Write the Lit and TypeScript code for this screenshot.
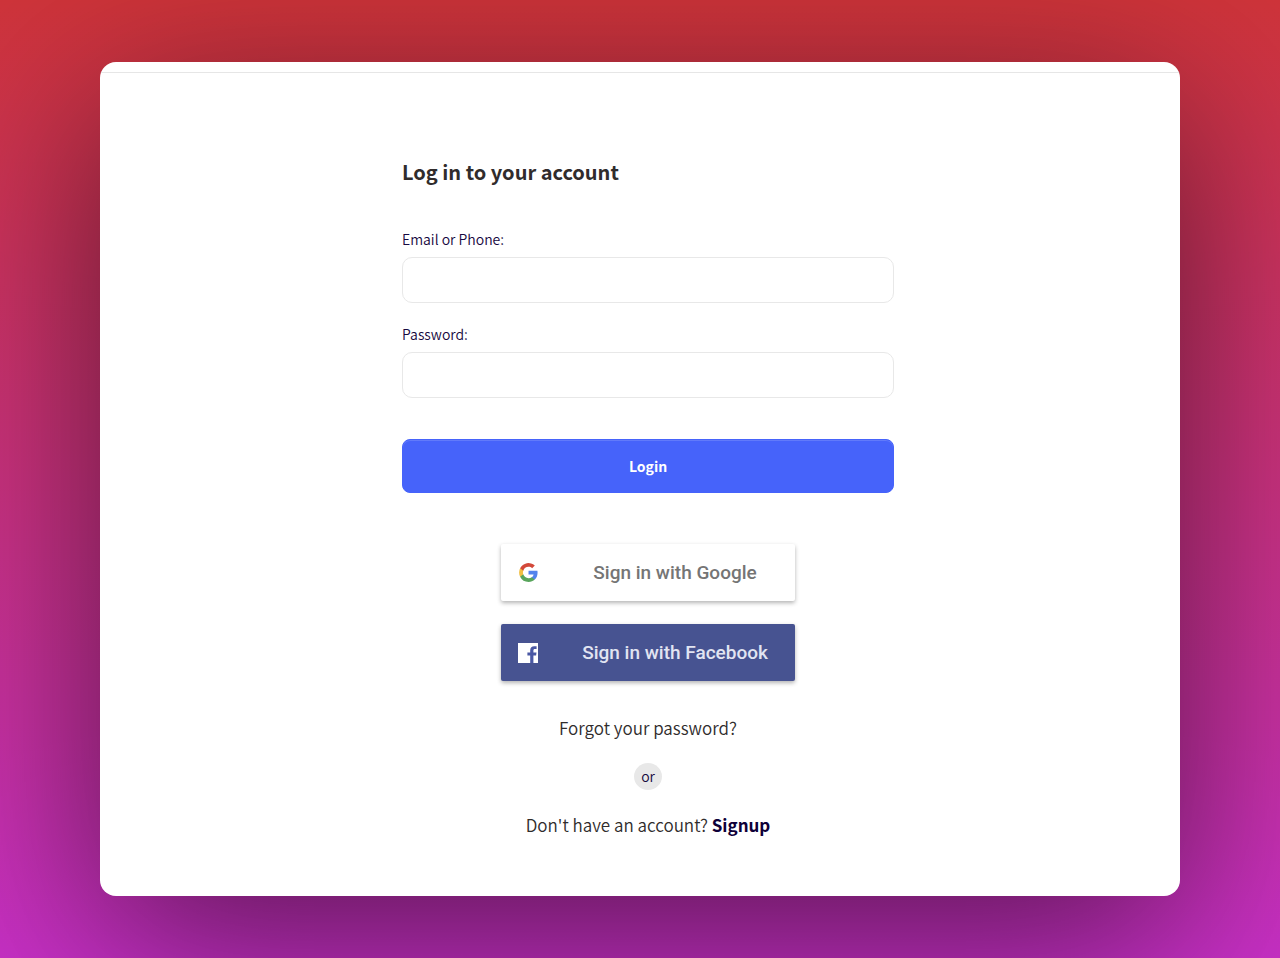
import { LitElement, html, css } from "lit";
import { customElement } from "lit/decorators.js";

@customElement("app-root")
export class AppRoot extends LitElement {
  static styles = css`
    :host {
      display: block;
      font-family: "Noto Sans CJK JP", "Noto Sans", sans-serif;
      color: #302c2c;
    }
    * {
      box-sizing: border-box;
    }
    .page {
      min-height: 100vh;
      display: grid;
      align-items: center;
      padding: 60px 100px;
      overflow: hidden;
      background: linear-gradient(#cf343a, #c830c6);
    }
    .card {
      padding: 10px 0 57px;
      border-radius: 16px;
      overflow: hidden;
      background: #fff;
      box-shadow: 0 45px 180px rgba(0, 0, 0, 0.55);
    }
    .body {
      border-top: 1px solid #e6e6e6;
      padding: 83px 16px 0 32px;
    }
    .form {
      width: 100%;
      max-width: 492px;
      margin: 0 auto;
      display: flex;
      flex-direction: column;
    }
    h1 {
      margin: 0 0 39px;
      font-size: 20px;
      line-height: 32px;
      font-weight: 700;
    }
    label {
      font-size: 14px;
      line-height: 24px;
      margin-bottom: 6px;
      color: #170840;
      font-weight: 350;
    }
    input {
      height: 46px;
      width: 100%;
      margin: 0 0 19px;
      padding: 0 16px;
      border: 1px solid #e8e8e8;
      border-radius: 10px;
      background: #fff;
      font: inherit;
      font-size: 14px;
    }
    button {
      font: inherit;
      cursor: pointer;
    }
    .login {
      height: 54px;
      margin: 22px 0 51px;
      border: 1px solid #4663fa;
      border-radius: 8px;
      background: #4663fa;
      box-shadow: inset 0 1px rgba(255, 255, 255, 0.15);
      color: #fff;
      font-size: 14px;
      font-weight: 700;
    }
    .social {
      align-self: center;
      display: flex;
      align-items: center;
      width: 294px;
      height: 57px;
      margin-bottom: 23px;
      padding: 0 16px;
      border: 0;
      border-radius: 2px;
      box-shadow: 0 2px 4px rgba(0, 0, 0, 0.3);
      font-family: Roboto, sans-serif;
      font-size: 19px;
      font-weight: 500;
      background: #fff;
      color: #757575;
    }
    .social svg {
      width: 22px;
      height: 22px;
      flex: none;
    }
    .social span {
      flex: 1;
      padding-left: 32px;
      text-align: center;
      white-space: nowrap;
    }
    .facebook {
      background: #475391;
      color: #e1e4f2;
    }
    a {
      color: inherit;
      text-decoration: none;
    }
    .line {
      margin: 0;
      text-align: center;
      font-size: 17px;
      line-height: 28px;
      font-weight: 350;
    }
    .forgot {
      margin-top: 10px;
    }
    .or {
      align-self: center;
      width: 28px;
      height: 27px;
      margin: 21px 0;
      border-radius: 50%;
      background: #e8e8e8;
      color: #170840;
      font-size: 14px;
      line-height: 27px;
      text-align: center;
      font-weight: 350;
    }
    .signup {
      color: #0e0038;
      font-weight: 700;
    }
  `;

  render() {
    return html`
      <main class="page">
        <section class="card">
          <div class="body">
            <form class="form" @submit=${(e: Event) => e.preventDefault()}>
              <h1>Log in to your account</h1>
              <label for="user">Email or Phone:</label>
              <input id="user" type="text" autocomplete="username" />
              <label for="pass">Password:</label>
              <input id="pass" type="password" autocomplete="current-password" />
              <button class="login" type="submit">Login</button>
              <button class="social" type="button">
                <svg viewBox="-2 -1 21 21" aria-hidden="true">
                  <path fill="#5383ec" d="M17.64 9.2c0-.64-.06-1.25-.16-1.84H9v3.48h4.84a4.14 4.14 0 0 1-1.8 2.72v2.26h2.92c1.7-1.57 2.68-3.88 2.68-6.62z"/>
                  <path fill="#58a55c" d="M9 18c2.43 0 4.47-.8 5.96-2.18l-2.92-2.26c-.8.54-1.84.86-3.04.86-2.34 0-4.33-1.58-5.04-3.71H.96v2.33A9 9 0 0 0 9 18z"/>
                  <path fill="#f1bf42" d="M3.96 10.71A5.4 5.4 0 0 1 3.68 9c0-.6.1-1.17.28-1.71V4.96H.96A9 9 0 0 0 0 9c0 1.45.35 2.83.96 4.04l3-2.33z"/>
                  <path fill="#d3493a" d="M9 3.58c1.32 0 2.5.45 3.44 1.35l2.58-2.59A8.99 8.99 0 0 0 .96 4.96l3 2.33C4.67 5.16 6.66 3.58 9 3.58z"/>
                </svg>
                <span>Sign in with Google</span>
              </button>
              <button class="social facebook" type="button">
                <svg viewBox="0 0 22 22" aria-hidden="true">
                  <path fill="#fff" d="M1 1h20v20H1z"/>
                  <path fill="#4a58a4" d="M12 21v-7.500H9.200v-3H12V8.300c0-2.700 1.600-4.100 4-4.100 1.200 0 2 .1 2.400.1V7h-1.600c-1.300 0-1.600.6-1.600 1.600v1.900h3.100l-.4 3h-2.700V21z" transform="translate(1.200 0)"/>
                </svg>
                <span>Sign in with Facebook</span>
              </button>
              <p class="line forgot"><a href="#forgot">Forgot your password?</a></p>
              <div class="or">or</div>
              <p class="line">Don't have an account? <a class="signup" href="#signup">Signup</a></p>
            </form>
          </div>
        </section>
      </main>
    `;
  }
}
